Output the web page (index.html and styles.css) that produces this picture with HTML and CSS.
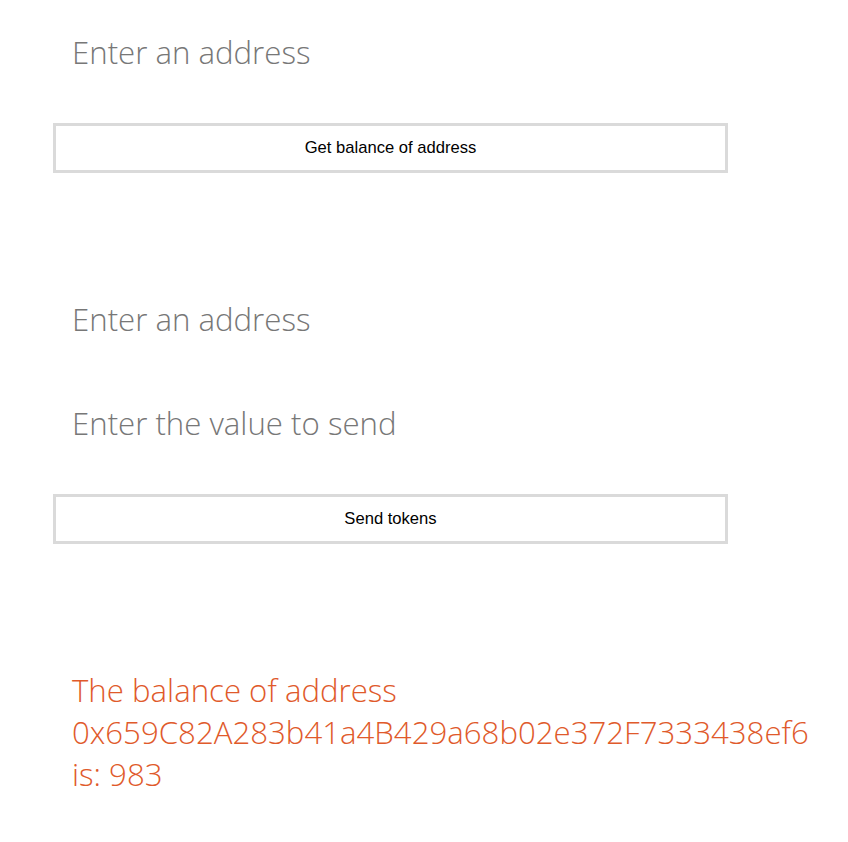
FILE: index.html
```html
<!DOCTYPE html>
<html>
<head>
<meta charset="utf-8">
<link rel="stylesheet" href="styles.css">
</head>
<body>
<div class="page">
  <form class="form first">
    <input class="field" type="text" placeholder="Enter an address">
    <button class="btn" type="button">Get balance of address</button>
  </form>
  <form class="form second">
    <input class="field" type="text" placeholder="Enter an address">
    <input class="field" type="text" placeholder="Enter the value to send">
    <button class="btn" type="button">Send tokens</button>
  </form>
  <p class="result">The balance of address 0x659C82A283b41a4B429a68b02e372F7333438ef6 is: 983</p>
</div>
</body>
</html>
```
FILE: styles.css
```css
html, body {
  margin: 0;
  padding: 0;
  background: #fff;
}
.page {
  padding: 0 0 0 53px;
  width: 780px;
}
.form {
  display: flex;
  flex-direction: column;
  width: 675px;
}
.first {
  padding-top: 27px;
}
.second {
  padding-top: 121px;
}
.field {
  border: none;
  outline: none;
  background: transparent;
  font-family: "Open Sans", sans-serif;
  font-weight: 300;
  font-size: 31.2px;
  color: #777;
  padding: 0 0 0 19px;
  height: 50px;
  margin-bottom: 46px;
}
.field::placeholder {
  color: #777;
}
.second .field:first-child {
  margin-bottom: 54px;
}
.second .field:nth-child(2) {
  margin-bottom: 46px;
}
.btn {
  box-sizing: border-box;
  width: 675px;
  height: 50px;
  border: 3px solid #dadada;
  background: #fff;
  font-family: "Liberation Sans", Arial, sans-serif;
  font-size: 16.6px;
  color: #000;
}
.result {
  margin: 125px 0 0 19px;
  font-family: "Open Sans", sans-serif;
  font-weight: 300;
  font-size: 31.2px;
  line-height: 42px;
  color: #e05a2b;
  width: 760px;
}
```
